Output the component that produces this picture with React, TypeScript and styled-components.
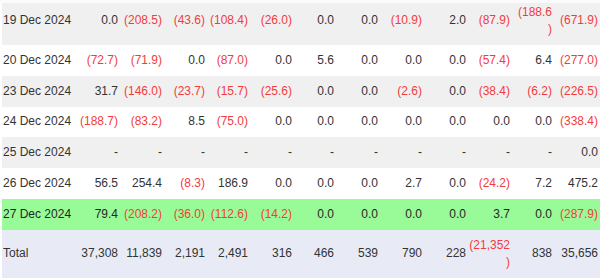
import React from "react";
import styled, { createGlobalStyle } from "styled-components";

const GlobalStyle = createGlobalStyle`
  html, body {
    margin: 0;
    padding: 0;
    background: #ffffff;
    overflow: hidden;
  }
  body {
    font-family: "Liberation Sans", Arial, Helvetica, sans-serif;
  }
`;

const Viewport = styled.div`
  position: relative;
  width: 600px;
  height: 278px;
  overflow: hidden;
  padding-left: 2px;
  box-sizing: border-box;
`;

const HeaderEdge = styled.div`
  position: absolute;
  top: 0;
  left: 0;
  right: 0;
  height: 3px;
  background: #fbfbfb;
  z-index: 2;
`;

const Table = styled.table`
  table-layout: fixed;
  width: 598px;
  margin-top: -3px;
  border-collapse: collapse;
  border-spacing: 0;
  font-size: 12px;
  line-height: 17.2px;
  color: #333333;
`;

type RowKind = "odd" | "even" | "highlight" | "total";

const rowBg: Record<RowKind, string> = {
  odd: "#f0f0f0",
  even: "#ffffff",
  highlight: "#98fb98",
  total: "#e8ebf6",
};

const Row = styled.tr<{ $kind: RowKind }>`
  background: ${(p) => rowBg[p.$kind]};
  color: ${(p) => (p.$kind === "highlight" ? "#262626" : "#333333")};
`;

const DateCell = styled.td`
  padding: 6.8px 2px 6.8px 1px;
  text-align: left;
  vertical-align: middle;
  white-space: nowrap;
`;

const NumCell = styled.td<{ $neg: boolean }>`
  padding: 6.8px 2px 6.8px 1px;
  text-align: right;
  vertical-align: middle;
  overflow-wrap: anywhere;
  color: ${(p) => (p.$neg ? "#f23c3c" : "inherit")};

  &:nth-child(12) {
    padding-left: 4px;
  }
`;

const widths = [74, 44, 44, 43, 43, 44, 42, 44, 44, 44, 44, 42, 46];

const rows: { label: string; kind: RowKind; values: string[] }[] = [
  {
    label: "19 Dec 2024",
    kind: "odd",
    values: ["0.0", "(208.5)", "(43.6)", "(108.4)", "(26.0)", "0.0", "0.0", "(10.9)", "2.0", "(87.9)", "(188.6)", "(671.9)"],
  },
  {
    label: "20 Dec 2024",
    kind: "even",
    values: ["(72.7)", "(71.9)", "0.0", "(87.0)", "0.0", "5.6", "0.0", "0.0", "0.0", "(57.4)", "6.4", "(277.0)"],
  },
  {
    label: "23 Dec 2024",
    kind: "odd",
    values: ["31.7", "(146.0)", "(23.7)", "(15.7)", "(25.6)", "0.0", "0.0", "(2.6)", "0.0", "(38.4)", "(6.2)", "(226.5)"],
  },
  {
    label: "24 Dec 2024",
    kind: "even",
    values: ["(188.7)", "(83.2)", "8.5", "(75.0)", "0.0", "0.0", "0.0", "0.0", "0.0", "0.0", "0.0", "(338.4)"],
  },
  {
    label: "25 Dec 2024",
    kind: "odd",
    values: ["-", "-", "-", "-", "-", "-", "-", "-", "-", "-", "-", "0.0"],
  },
  {
    label: "26 Dec 2024",
    kind: "even",
    values: ["56.5", "254.4", "(8.3)", "186.9", "0.0", "0.0", "0.0", "2.7", "0.0", "(24.2)", "7.2", "475.2"],
  },
  {
    label: "27 Dec 2024",
    kind: "highlight",
    values: ["79.4", "(208.2)", "(36.0)", "(112.6)", "(14.2)", "0.0", "0.0", "0.0", "0.0", "3.7", "0.0", "(287.9)"],
  },
  {
    label: "Total",
    kind: "total",
    values: ["37,308", "11,839", "2,191", "2,491", "316", "466", "539", "790", "228", "(21,352)", "838", "35,656"],
  },
];

export default function App() {
  return (
    <>
      <GlobalStyle />
      <Viewport>
        <HeaderEdge />
        <Table>
          <colgroup>
            {widths.map((w, i) => (
              <col key={i} style={{ width: `${w}px` }} />
            ))}
          </colgroup>
          <tbody>
            {rows.map((r) => (
              <Row key={r.label} $kind={r.kind}>
                <DateCell>{r.label}</DateCell>
                {r.values.map((v, i) => (
                  <NumCell key={i} $neg={v.startsWith("(")}>
                    {v}
                  </NumCell>
                ))}
              </Row>
            ))}
          </tbody>
        </Table>
      </Viewport>
    </>
  );
}
